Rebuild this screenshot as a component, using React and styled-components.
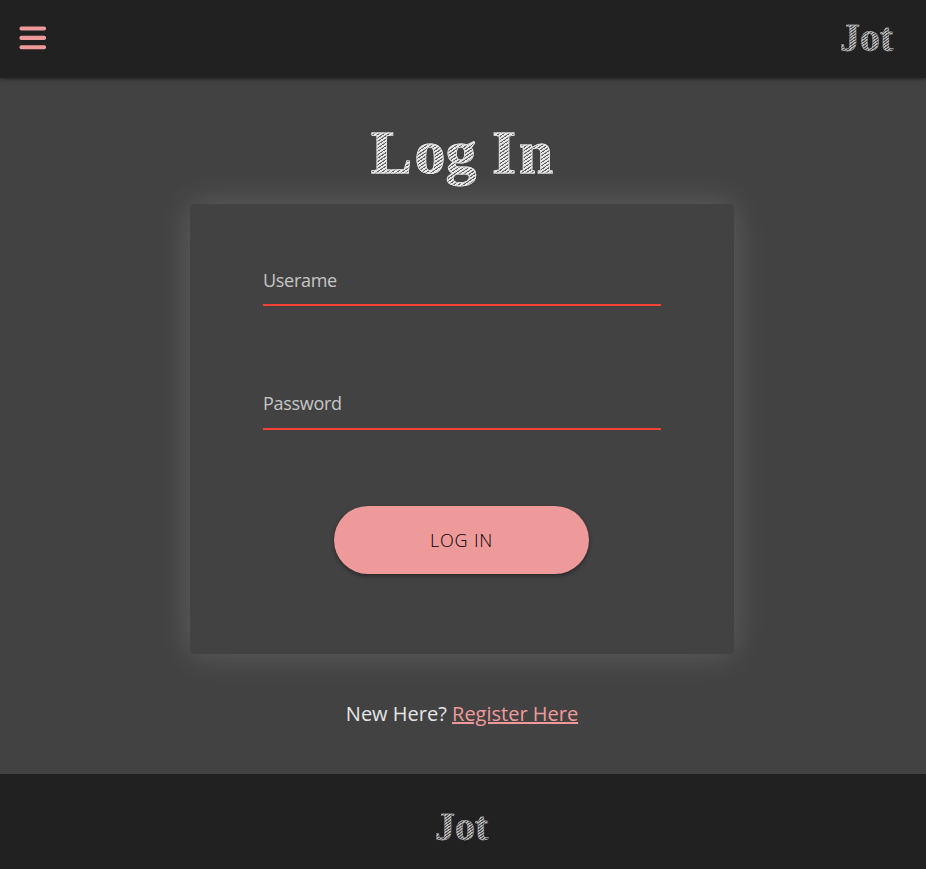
import React from "react";
import styled, { createGlobalStyle, css } from "styled-components";

const GlobalStyle = createGlobalStyle`
  * { box-sizing: border-box; }
  body { margin: 0; background: #424242; font-family: "Open Sans", sans-serif; }
`;

const Page = styled.div`
  min-height: 869px;
  display: flex;
  flex-direction: column;
  background: #424242;
  color: #e5e5e5;
`;

const Header = styled.header`
  height: 78px;
  padding: 0 34px 3px 19px;
  display: flex;
  align-items: center;
  justify-content: space-between;
  background: #212121;
  box-shadow: 0 1px 4px rgba(0, 0, 0, 0.5);
`;

const MenuButton = styled.button`
  display: flex;
  padding: 0;
  border: 0;
  background: none;
`;

const chalk = css`
  font-family: "Liberation Serif", serif;
  font-weight: 700;
  color: transparent;
  white-space: nowrap;
  background-clip: text;
  -webkit-background-clip: text;
`;

const Logo = styled.div`
  ${chalk}
  width: 52px;
  height: 44px;
  font-size: 40px;
  line-height: 44px;
  background-image: repeating-linear-gradient(144deg, #b8b8b8 0 1px, #484848 1.5px 2.3px);
  -webkit-text-stroke: 0.4px #b9bdbf;
`;

const Main = styled.main`
  flex: 1;
  display: flex;
  flex-direction: column;
  align-items: center;
  padding: 38px 2px 0 0;
`;

const Title = styled.h1`
  ${chalk}
  margin: 0;
  height: 88px;
  font-size: 62px;
  line-height: 72px;
  background-image: repeating-linear-gradient(146deg, #e8e8e8 0 1.5px, #606060 2px 2.8px);
  -webkit-text-stroke: 0.8px #e5e5e5;
`;

const WideCap = styled.span`
  letter-spacing: 2.5px;
`;

const Card = styled.form`
  width: 544px;
  height: 450px;
  padding: 56px 73px 0;
  display: flex;
  flex-direction: column;
  align-items: center;
  border-radius: 4px;
  background: #424242;
  box-shadow: 0 0 35px rgba(255, 255, 255, 0.17);
`;

const Field = styled.label`
  width: 398px;
  height: 46px;
  margin-bottom: 78px;
  border-bottom: 2px solid #f44336;
  color: #c6c6c6;
  font-size: 18px;
  line-height: ${({ $line }) => $line || 41}px;
  letter-spacing: -0.3px;
`;

const SubmitButton = styled.button`
  width: 255px;
  height: 68px;
  margin: -2px 1px 0 0;
  padding: 0;
  border: 0;
  border-radius: 34px;
  background: #ef9a9a;
  color: #000;
  font: 300 18px/68px "Open Sans", sans-serif;
  letter-spacing: 0.8px;
  box-shadow: 0 2px 4px rgba(0, 0, 0, 0.4);
`;

const Prompt = styled.p`
  margin: 46px 0 0;
  font-size: 20px;
  line-height: 28px;
`;

const RegisterLink = styled.a`
  color: #ef9a9a;
  text-decoration: underline;
  text-decoration-thickness: 2px;
`;

const Footer = styled.footer`
  height: 95px;
  padding: 11px 4px 0 0;
  display: flex;
  align-items: center;
  justify-content: center;
  background: #212121;
`;

export default function App() {
  return (
    <Page>
      <GlobalStyle />
      <Header>
        <MenuButton type="button" aria-label="Menu">
          <svg width="28" height="24" viewBox="0 0 28 24" fill="#ef9a9a">
            <rect x="0.5" y="0.4" width="26.5" height="4.1" rx="1.7" />
            <rect x="0.5" y="9.8" width="26.5" height="4.1" rx="1.7" />
            <rect x="0.5" y="19.2" width="26.5" height="4.1" rx="1.7" />
          </svg>
        </MenuButton>
        <Logo>Jot</Logo>
      </Header>
      <Main>
        <Title>
          <WideCap>L</WideCap>og <WideCap>I</WideCap>n
        </Title>
        <Card>
          <Field>Userame</Field>
          <Field $line={39}>Password</Field>
          <SubmitButton type="button">LOG IN</SubmitButton>
        </Card>
        <Prompt>
          New Here? <RegisterLink href="#register">Register Here</RegisterLink>
        </Prompt>
      </Main>
      <Footer>
        <Logo>Jot</Logo>
      </Footer>
    </Page>
  );
}
